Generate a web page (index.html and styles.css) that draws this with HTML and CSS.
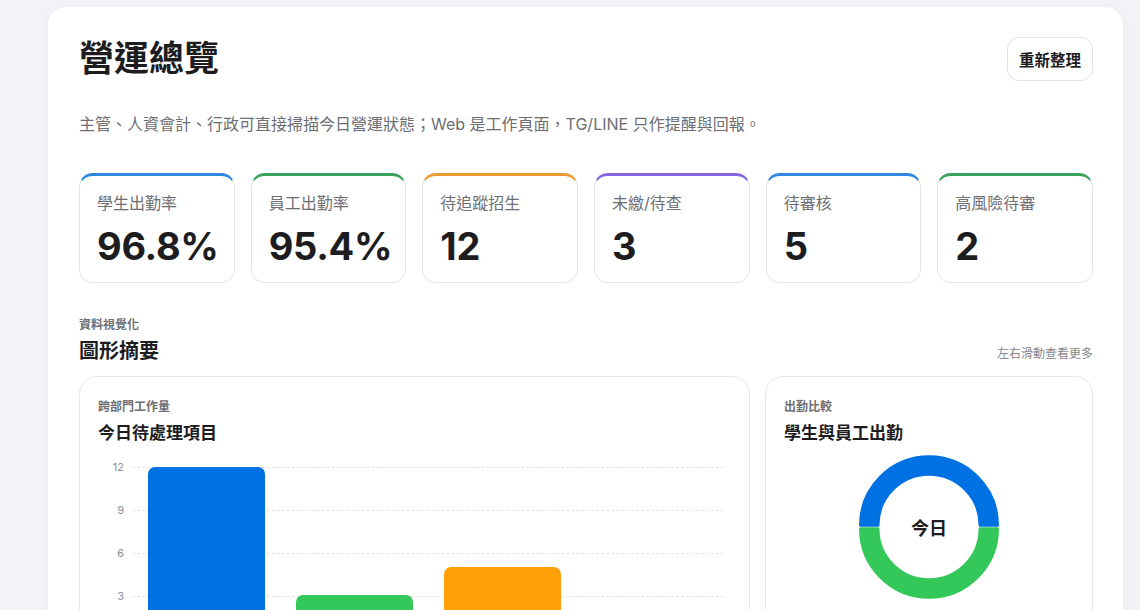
FILE: index.html
```html
<!DOCTYPE html>
<html lang="zh-Hant">
<head>
  <meta charset="UTF-8" />
  <meta name="viewport" content="width=device-width, initial-scale=1.0"/>
  <title>營運總覽</title>
  <link rel="stylesheet" href="styles.css">
</head>
<body>
  <main class="panel">
    <header class="panel-head">
      <h1>營運總覽</h1>
      <button class="refresh-btn">重新整理</button>
    </header>
    <p class="lead">主管、人資會計、行政可直接掃描今日營運狀態；Web 是工作頁面，TG/LINE 只作提醒與回報。</p>

    <!-- KPI cards -->
    <section class="stats">
      <div class="stat stat-blue"><span class="stat-label">學生出勤率</span><strong class="stat-value">96.8%</strong></div>
      <div class="stat stat-green"><span class="stat-label">員工出勤率</span><strong class="stat-value">95.4%</strong></div>
      <div class="stat stat-orange"><span class="stat-label">待追蹤招生</span><strong class="stat-value">12</strong></div>
      <div class="stat stat-purple"><span class="stat-label">未繳/待查</span><strong class="stat-value">3</strong></div>
      <div class="stat stat-blue"><span class="stat-label">待審核</span><strong class="stat-value">5</strong></div>
      <div class="stat stat-green"><span class="stat-label">高風險待審</span><strong class="stat-value">2</strong></div>
    </section>

    <div class="section-head">
      <div>
        <div class="eyebrow">資料視覺化</div>
        <h2>圖形摘要</h2>
      </div>
      <span class="hint">左右滑動查看更多</span>
    </div>

    <section class="charts">
      <div class="chart-card chart-wide">
        <div class="eyebrow">跨部門工作量</div>
        <h3>今日待處理項目</h3>
        <div class="bar-chart">
          <div class="axis">
            <span>12</span><span>9</span><span>6</span><span>3</span>
          </div>
          <div class="plot">
            <div class="grid-line"></div>
            <div class="grid-line"></div>
            <div class="grid-line"></div>
            <div class="grid-line"></div>
            <div class="bars">
              <div class="bar bar-blue"></div>
              <div class="bar bar-green"></div>
              <div class="bar bar-orange"></div>
            </div>
          </div>
        </div>
      </div>

      <div class="chart-card chart-narrow">
        <div class="eyebrow">出勤比較</div>
        <h3>學生與員工出勤</h3>
        <div class="donut">
          <svg width="144" height="144" viewBox="0 0 144 144">
            <path class="seg-blue" d="M3.5 70.3 A68.5 68.5 0 0 1 140.5 70.3 L123 70.3 A51 51 0 0 0 21 70.3 Z"/>
            <path class="seg-green" d="M3.5 73.7 A68.5 68.5 0 0 0 140.5 73.7 L123 73.7 A51 51 0 0 1 21 73.7 Z"/>
          </svg>
          <span class="donut-label">今日</span>
        </div>
      </div>
    </section>
  </main>
</body>
</html>
```

FILE: styles.css
```css
* {
  box-sizing: border-box;
  margin: 0;
  padding: 0;
}

body {
  font-family: Inter, "Noto Sans CJK TC", sans-serif;
  background-color: #f2f3f7;
  color: #1d1d1f;
  padding: 7px 17px 0 48px;
  overflow: hidden;
}

.panel {
  background-color: #fff;
  border-radius: 18px;
  padding: 30px 30px 40px 31px;
  box-shadow: 0 2px 12px rgba(0, 0, 0, 0.04);
  min-height: 700px;
}

.panel-head {
  display: flex;
  justify-content: space-between;
  align-items: flex-start;
}

h1 {
  font-size: 35px;
  font-weight: 700;
  line-height: 40px;
  margin-top: 1px;
}

.refresh-btn {
  font-family: inherit;
  font-size: 15.5px;
  font-weight: 600;
  color: #1d1d1f;
  background-color: #fff;
  border: 1px solid #e2e2e6;
  border-radius: 12px;
  height: 44px;
  width: 86px;
  cursor: pointer;
}

.lead {
  font-size: 16px;
  color: #6e6e73;
  margin-top: 32px;
  line-height: 22px;
}

.stats {
  display: grid;
  grid-template-columns: repeat(6, minmax(0, 1fr));
  gap: 16px;
  margin-top: 38px;
}

.stat {
  height: 110px;
  border: 1px solid #e6e6ea;
  border-top: 3px solid;
  border-radius: 14px;
  padding: 16px 17px 0;
  display: flex;
  flex-direction: column;
}

.stat-blue { border-top-color: #2d86e0; }
.stat-green { border-top-color: #3aa05e; }
.stat-orange { border-top-color: #eb9b34; }
.stat-purple { border-top-color: #8466dd; }

.stat-label {
  font-size: 16px;
  color: #6e6e73;
  line-height: 22px;
}

.stat-value {
  font-size: 38px;
  font-weight: 700;
  line-height: 48px;
  margin-top: 8px;
  letter-spacing: -0.3px;
}

.section-head {
  display: flex;
  justify-content: space-between;
  align-items: flex-end;
  margin-top: 34px;
}

.eyebrow {
  font-size: 12px;
  font-weight: 600;
  color: #6e6e73;
  line-height: 16px;
}

h2 {
  font-size: 20px;
  font-weight: 700;
  line-height: 28px;
  margin-top: 4px;
}

.hint {
  font-size: 12px;
  color: #86868b;
  margin-bottom: 4px;
}

.charts {
  display: flex;
  gap: 15px;
  margin-top: 11px;
}

.chart-card {
  border: 1px solid #e8e8ec;
  border-radius: 18px;
  padding: 22px 18px 0;
  height: 260px;
}

.chart-wide {
  flex: 1;
}

.chart-narrow {
  width: 328px;
}

h3 {
  font-size: 17px;
  font-weight: 700;
  line-height: 24px;
  margin-top: 6px;
}

/* bar chart */
.bar-chart {
  display: flex;
  margin-top: 22px;
}

.axis {
  width: 34px;
  display: flex;
  flex-direction: column;
  align-items: flex-end;
  padding-right: 8px;
}

.axis span {
  font-size: 11px;
  color: #8e8e93;
  height: 43px;
  line-height: 14px;
  margin-top: -7px;
  margin-bottom: 7px;
}

.plot {
  position: relative;
  width: 592px;
  height: 180px;
}

.grid-line {
  height: 43px;
  border-top: 1px dashed #e4e4e8;
}

.bars {
  position: absolute;
  top: 0;
  left: 16px;
  display: flex;
  align-items: flex-start;
  gap: 31px;
}

.bar {
  width: 117px;
  border-radius: 7px 7px 0 0;
  height: 200px;
}

.bar-blue { background-color: #0071e3; }
.bar-green { background-color: #34c759; margin-top: 128px; }
.bar-orange { background-color: #ff9f0a; margin-top: 100px; }

/* donut */
.donut {
  position: relative;
  width: 144px;
  height: 144px;
  margin: 10px auto 0;
}

.donut svg {
  display: block;
}

.seg-blue {
  fill: #0071e3;
  stroke: #0071e3;
  stroke-width: 3;
  stroke-linejoin: round;
}

.seg-green {
  fill: #34c759;
  stroke: #34c759;
  stroke-width: 3;
  stroke-linejoin: round;
}

.donut-label {
  position: absolute;
  inset: 0;
  display: flex;
  align-items: center;
  justify-content: center;
  font-size: 18px;
  font-weight: 700;
}
```
